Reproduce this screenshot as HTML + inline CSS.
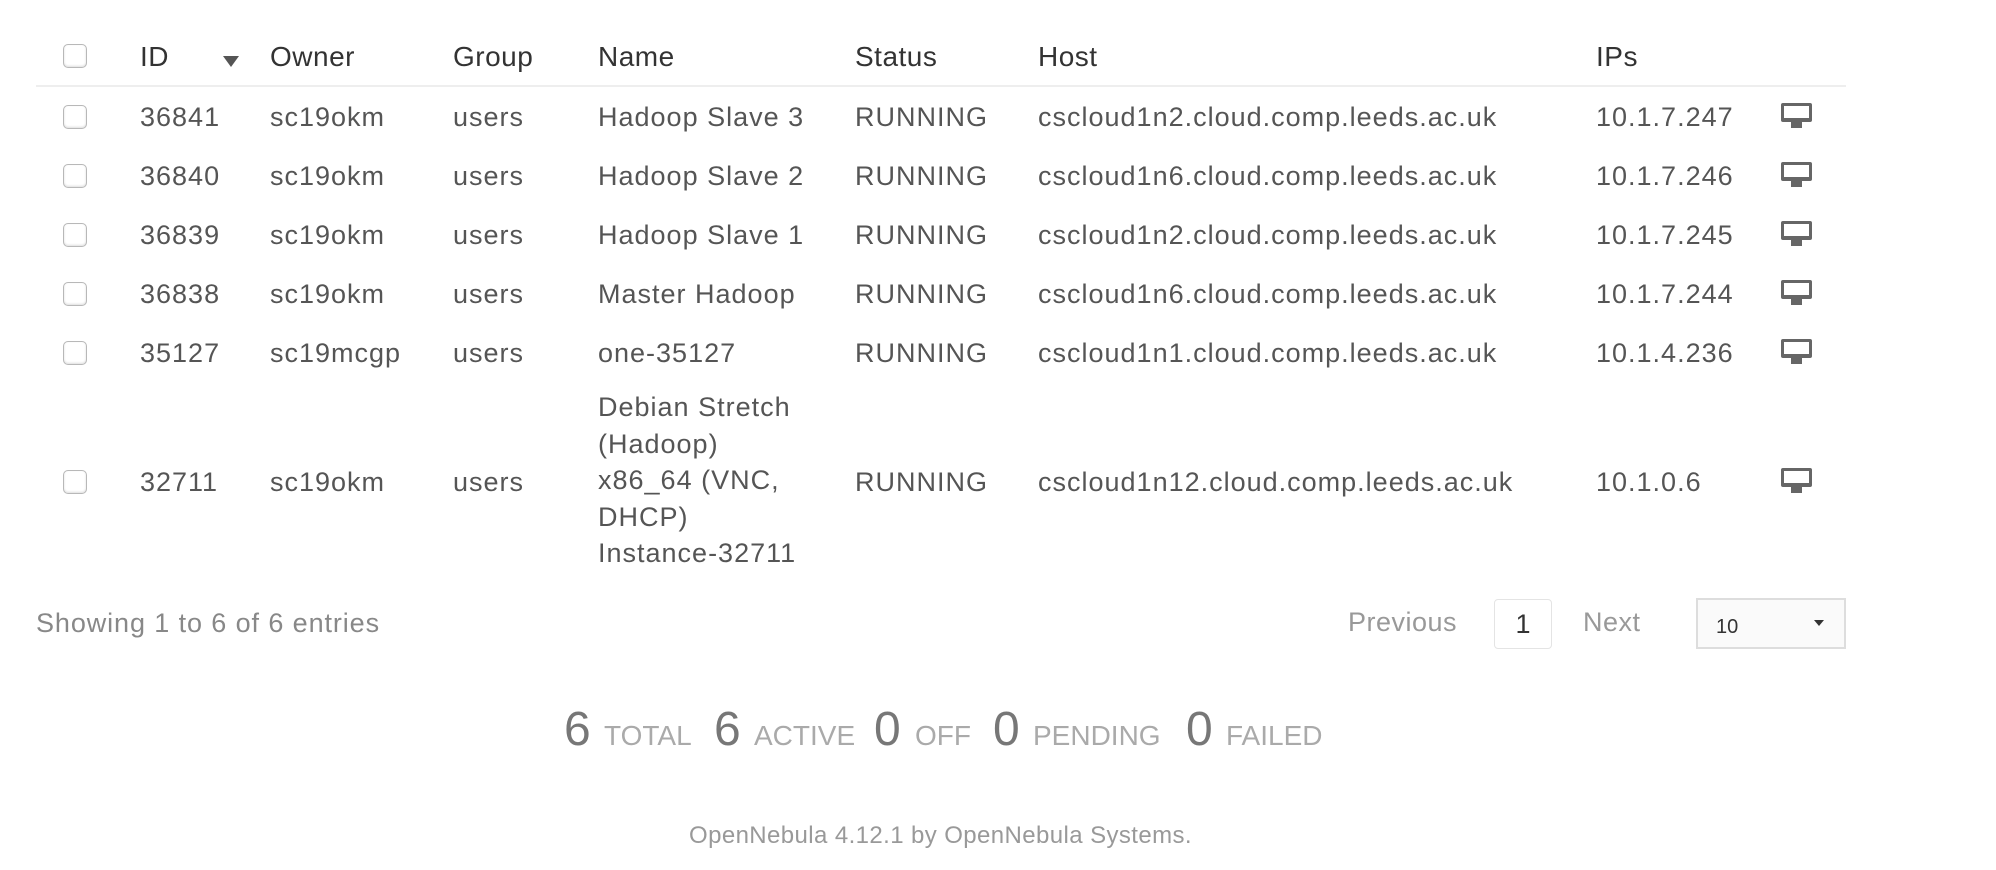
<!DOCTYPE html>
<html><head><meta charset="utf-8"><style>
body{margin:0;width:1996px;height:870px;background:#fff;font-family:"Liberation Sans",sans-serif;position:relative;overflow:hidden}
.a{position:absolute;white-space:nowrap;line-height:1}
.h{font-size:28px;color:#333;top:43px;letter-spacing:0.5px}
.c{font-size:27px;color:#555;letter-spacing:1px}
.cb{position:absolute;width:22px;height:22px;border:1px solid #b8b8b8;border-radius:5px;background:#fff;box-shadow:inset 0 -1px 2px #ddd}
.mon{position:absolute;width:31px;height:25px}
.big{font-size:48px;color:#777}
.lab{font-size:28px;color:#aaa}
</style></head><body>
<div class="cb" style="left:63px;top:44px"></div>
<div class="a h" style="left:140px">ID</div>
<div class="a" style="left:223px;top:56px;width:0;height:0;border-left:8px solid transparent;border-right:8px solid transparent;border-top:11px solid #555"></div>
<div class="a h" style="left:270px">Owner</div>
<div class="a h" style="left:453px">Group</div>
<div class="a h" style="left:598px">Name</div>
<div class="a h" style="left:855px">Status</div>
<div class="a h" style="left:1038px">Host</div>
<div class="a h" style="left:1596px">IPs</div>
<div class="a" style="left:36px;top:85px;width:1810px;height:2px;background:#eee"></div>

<div class="cb" style="left:63px;top:105px"></div><div class="a c" style="left:140px;top:104px">36841</div><div class="a c" style="left:270px;top:104px">sc19okm</div><div class="a c" style="left:453px;top:104px">users</div><div class="a c" style="left:598px;top:104px">Hadoop Slave 3</div><div class="a c" style="left:855px;top:104px">RUNNING</div><div class="a c" style="left:1038px;top:104px">cscloud1n2.cloud.comp.leeds.ac.uk</div><div class="a c" style="left:1596px;top:104px">10.1.7.247</div>
<svg class="mon" style="left:1781px;top:103px" viewBox="0 0 31 25"><rect x="0" y="0" width="31" height="19" rx="2" fill="#666"/><rect x="3" y="3" width="25" height="12" fill="#fff"/><rect x="10" y="19" width="11" height="6" fill="#666"/></svg>

<div class="cb" style="left:63px;top:164px"></div><div class="a c" style="left:140px;top:163px">36840</div><div class="a c" style="left:270px;top:163px">sc19okm</div><div class="a c" style="left:453px;top:163px">users</div><div class="a c" style="left:598px;top:163px">Hadoop Slave 2</div><div class="a c" style="left:855px;top:163px">RUNNING</div><div class="a c" style="left:1038px;top:163px">cscloud1n6.cloud.comp.leeds.ac.uk</div><div class="a c" style="left:1596px;top:163px">10.1.7.246</div>
<svg class="mon" style="left:1781px;top:162px" viewBox="0 0 31 25"><rect x="0" y="0" width="31" height="19" rx="2" fill="#666"/><rect x="3" y="3" width="25" height="12" fill="#fff"/><rect x="10" y="19" width="11" height="6" fill="#666"/></svg>

<div class="cb" style="left:63px;top:223px"></div><div class="a c" style="left:140px;top:222px">36839</div><div class="a c" style="left:270px;top:222px">sc19okm</div><div class="a c" style="left:453px;top:222px">users</div><div class="a c" style="left:598px;top:222px">Hadoop Slave 1</div><div class="a c" style="left:855px;top:222px">RUNNING</div><div class="a c" style="left:1038px;top:222px">cscloud1n2.cloud.comp.leeds.ac.uk</div><div class="a c" style="left:1596px;top:222px">10.1.7.245</div>
<svg class="mon" style="left:1781px;top:221px" viewBox="0 0 31 25"><rect x="0" y="0" width="31" height="19" rx="2" fill="#666"/><rect x="3" y="3" width="25" height="12" fill="#fff"/><rect x="10" y="19" width="11" height="6" fill="#666"/></svg>

<div class="cb" style="left:63px;top:282px"></div><div class="a c" style="left:140px;top:281px">36838</div><div class="a c" style="left:270px;top:281px">sc19okm</div><div class="a c" style="left:453px;top:281px">users</div><div class="a c" style="left:598px;top:281px">Master Hadoop</div><div class="a c" style="left:855px;top:281px">RUNNING</div><div class="a c" style="left:1038px;top:281px">cscloud1n6.cloud.comp.leeds.ac.uk</div><div class="a c" style="left:1596px;top:281px">10.1.7.244</div>
<svg class="mon" style="left:1781px;top:280px" viewBox="0 0 31 25"><rect x="0" y="0" width="31" height="19" rx="2" fill="#666"/><rect x="3" y="3" width="25" height="12" fill="#fff"/><rect x="10" y="19" width="11" height="6" fill="#666"/></svg>

<div class="cb" style="left:63px;top:341px"></div><div class="a c" style="left:140px;top:340px">35127</div><div class="a c" style="left:270px;top:340px">sc19mcgp</div><div class="a c" style="left:453px;top:340px">users</div><div class="a c" style="left:598px;top:340px">one-35127</div><div class="a c" style="left:855px;top:340px">RUNNING</div><div class="a c" style="left:1038px;top:340px">cscloud1n1.cloud.comp.leeds.ac.uk</div><div class="a c" style="left:1596px;top:340px">10.1.4.236</div>
<svg class="mon" style="left:1781px;top:339px" viewBox="0 0 31 25"><rect x="0" y="0" width="31" height="19" rx="2" fill="#666"/><rect x="3" y="3" width="25" height="12" fill="#fff"/><rect x="10" y="19" width="11" height="6" fill="#666"/></svg>

<div class="cb" style="left:63px;top:470px"></div><div class="a c" style="left:140px;top:469px">32711</div><div class="a c" style="left:270px;top:469px">sc19okm</div><div class="a c" style="left:453px;top:469px">users</div>
<div class="a c" style="left:598px;top:389px;line-height:36.5px;white-space:normal;width:200px">Debian Stretch<br>(Hadoop)<br>x86_64 (VNC,<br>DHCP)<br>Instance-32711</div>
<div class="a c" style="left:855px;top:469px">RUNNING</div><div class="a c" style="left:1038px;top:469px">cscloud1n12.cloud.comp.leeds.ac.uk</div><div class="a c" style="left:1596px;top:469px">10.1.0.6</div>
<svg class="mon" style="left:1781px;top:468px" viewBox="0 0 31 25"><rect x="0" y="0" width="31" height="19" rx="2" fill="#666"/><rect x="3" y="3" width="25" height="12" fill="#fff"/><rect x="10" y="19" width="11" height="6" fill="#666"/></svg>

<div class="a" style="left:36px;top:610px;font-size:27px;color:#888;letter-spacing:0.9px">Showing 1 to 6 of 6 entries</div>
<div class="a" style="left:1348px;top:609px;font-size:27px;color:#999;letter-spacing:0.5px">Previous</div>
<div class="a" style="left:1494px;top:599px;width:58px;height:50px;border:1px solid #e4e4e4;border-radius:4px;box-sizing:border-box;font-size:27px;color:#333;text-align:center;line-height:48px">1</div>
<div class="a" style="left:1583px;top:609px;font-size:27px;color:#999;letter-spacing:0.5px">Next</div>
<div class="a" style="left:1696px;top:598px;width:150px;height:51px;border:2px solid #ddd;background:#fafafa;box-sizing:border-box"></div>
<div class="a" style="left:1716px;top:617px;font-size:20px;color:#333">10</div>
<div class="a" style="left:1814px;top:620px;width:0;height:0;border-left:5px solid transparent;border-right:5px solid transparent;border-top:6px solid #333"></div>

<div class="a big" style="left:564px;top:706px">6</div><div class="a lab" style="left:604px;top:722px">TOTAL</div>
<div class="a big" style="left:714px;top:706px">6</div><div class="a lab" style="left:754px;top:722px">ACTIVE</div>
<div class="a big" style="left:874px;top:706px">0</div><div class="a lab" style="left:915px;top:722px">OFF</div>
<div class="a big" style="left:993px;top:706px">0</div><div class="a lab" style="left:1033px;top:722px">PENDING</div>
<div class="a big" style="left:1186px;top:706px">0</div><div class="a lab" style="left:1226px;top:722px">FAILED</div>

<div class="a" style="left:689px;top:824px;font-size:24px;color:#999;letter-spacing:0.4px">OpenNebula 4.12.1 by OpenNebula Systems.</div>
</body></html>
